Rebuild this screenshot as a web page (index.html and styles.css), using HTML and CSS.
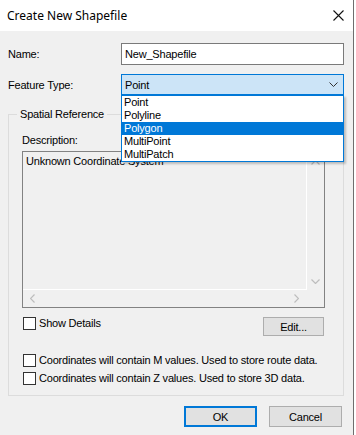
FILE: index.html
```html
<!DOCTYPE html>
<html>
<head>
<meta charset="utf-8">
<link rel="stylesheet" href="styles.css">
</head>
<body>
<div class="window">
  <div class="titlebar">
    <span class="title">Create New Shapefile</span>
    <svg class="close" width="11" height="11" viewBox="0 0 11 11"><path d="M0.5 0.5 L10.5 10.5 M10.5 0.5 L0.5 10.5" stroke="#111" stroke-width="1.1" fill="none"/></svg>
  </div>
  <div class="content">
    <div class="row name-row">
      <span class="label">Name:</span>
      <div class="textbox">New_Shapefile</div>
    </div>
    <div class="row type-row">
      <span class="label">Feature Type:</span>
      <div class="combo">
        <span>Point</span>
        <svg class="chev" width="9" height="5" viewBox="0 0 9 5"><path d="M0.5 0.5 L4.5 4.5 L8.5 0.5" stroke="#333" stroke-width="1" fill="none"/></svg>
        <ul class="dropdown">
          <li>Point</li>
          <li>Polyline</li>
          <li class="sel">Polygon</li>
          <li>MultiPoint</li>
          <li>MultiPatch</li>
        </ul>
      </div>
    </div>
    <fieldset class="group">
      <legend>Spatial Reference</legend>
      <div class="group-inner">
        <div class="desc-label">Description:</div>
        <div class="descbox">
          <div class="desc-text">Unknown Coordinate System</div>
          <div class="vscroll">
            <svg width="9" height="5" viewBox="0 0 9 5"><path d="M0.5 4.5 L4.5 0.5 L8.5 4.5" stroke="#bdbdbd" stroke-width="1.2" fill="none"/></svg>
            <svg width="9" height="5" viewBox="0 0 9 5"><path d="M0.5 0.5 L4.5 4.5 L8.5 0.5" stroke="#bdbdbd" stroke-width="1.2" fill="none"/></svg>
          </div>
          <div class="hscroll">
            <svg width="5" height="9" viewBox="0 0 5 9"><path d="M4.5 0.5 L0.5 4.5 L4.5 8.5" stroke="#bdbdbd" stroke-width="1.2" fill="none"/></svg>
            <svg width="5" height="9" viewBox="0 0 5 9"><path d="M0.5 0.5 L4.5 4.5 L0.5 8.5" stroke="#bdbdbd" stroke-width="1.2" fill="none"/></svg>
          </div>
          <div class="corner"></div>
        </div>
        <div class="details-row">
          <label class="check"><span class="box"></span>Show Details</label>
          <div class="btn edit">Edit...</div>
        </div>
        <div class="opts">
          <label class="check"><span class="box"></span>Coordinates will contain M values. Used to store route data.</label>
          <label class="check"><span class="box"></span>Coordinates will contain Z values. Used to store 3D data.</label>
        </div>
      </div>
    </fieldset>
    <div class="buttons">
      <div class="btn ok">OK</div>
      <div class="btn">Cancel</div>
    </div>
  </div>
</div>
</body>
</html>
```
FILE: styles.css
```css
* { box-sizing: border-box; }
html, body { margin: 0; padding: 0; background: #ffffff; }
body {
  font-family: "Liberation Sans", Arial, sans-serif;
  font-size: 11px;
  letter-spacing: -0.2px;
  color: #000;
}
.window {
  width: 354px;
  height: 435px;
  border-right: 1px solid #6e6e6e;
  background: #f0f0f0;
  display: flex;
  flex-direction: column;
}
.titlebar {
  height: 31px;
  background: #fff;
  display: flex;
  align-items: center;
  justify-content: space-between;
  padding: 0 9px 0 7px;
}
.title {
  font-family: "Noto Sans", "Open Sans", sans-serif;
  font-size: 12px;
  letter-spacing: 0;
  color: #000;
  padding-bottom: 1px;
}
.content {
  padding: 12px 9px 0 8px;
  display: flex;
  flex-direction: column;
}
.row {
  display: flex;
  align-items: center;
}
.label { width: 113px; }
.textbox {
  flex: 1;
  height: 22px;
  border: 1px solid #7a7a7a;
  background: #fff;
  padding: 0 3px;
  display: flex;
  align-items: center;
}
.type-row { margin-top: 9px; }
.combo {
  flex: 1;
  height: 21px;
  border: 1px solid #0078d7;
  background: #cce4f7;
  padding: 0 3px;
  display: flex;
  align-items: center;
  justify-content: space-between;
  position: relative;
}
.chev { margin-right: 2px; }
.dropdown {
  position: absolute;
  left: -1px;
  right: -1px;
  top: 20px;
  margin: 0;
  padding: 0;
  list-style: none;
  background: #fff;
  border: 1px solid #0078d7;
  box-shadow: 2px 2px 2px rgba(0,0,0,0.22);
  z-index: 5;
}
.dropdown li {
  height: 13px;
  line-height: 13px;
  padding: 0 2px;
}
.dropdown li.sel { background: #0078d7; color: #fff; }
.group {
  margin: 13px 0 0 0;
  padding: 0;
  border: 1px solid #dcdcdc;
  min-width: 0;
}
.group legend {
  margin-left: 8px;
  padding: 0 3px;
  line-height: 13px;
}
.group-inner {
  padding: 13px 18px 10px 13px;
}
.desc-label { line-height: 13px; }
.descbox {
  margin-top: 4px;
  height: 157px;
  border: 1px solid #828282;
  display: grid;
  grid-template-columns: 1fr 17px;
  grid-template-rows: 1fr 17px;
}
.desc-text {
  border-right: 1px solid #fff;
  border-bottom: 1px solid #fff;
  padding: 3px 3px;
  line-height: 13px;
}
.vscroll {
  display: flex;
  flex-direction: column;
  justify-content: space-between;
  align-items: center;
  padding: 8px 0 6px;
}
.hscroll {
  display: flex;
  justify-content: space-between;
  align-items: center;
  padding: 0 8px 0 7px;
}
.details-row {
  margin-top: 9px;
  display: flex;
  justify-content: space-between;
  align-items: flex-start;
}
.check {
  display: flex;
  align-items: center;
  margin-left: 1px;
  line-height: 13px;
}
.box {
  width: 13px;
  height: 13px;
  border: 1px solid #333;
  background: #fff;
  margin-right: 3px;
}
.btn {
  border: 1px solid #adadad;
  background: #e1e1e1;
  display: flex;
  align-items: center;
  justify-content: center;
}
.edit {
  width: 61px;
  height: 19px;
  margin-right: 1px;
}
.opts {
  margin-top: 18px;
  display: flex;
  flex-direction: column;
  gap: 5px;
}
.buttons {
  margin-top: 10px;
  display: flex;
  justify-content: flex-end;
  gap: 12px;
  padding-right: 2px;
}
.buttons .btn { width: 73px; height: 21px; }
.btn.ok { border: 2px solid #0078d7; }
```
